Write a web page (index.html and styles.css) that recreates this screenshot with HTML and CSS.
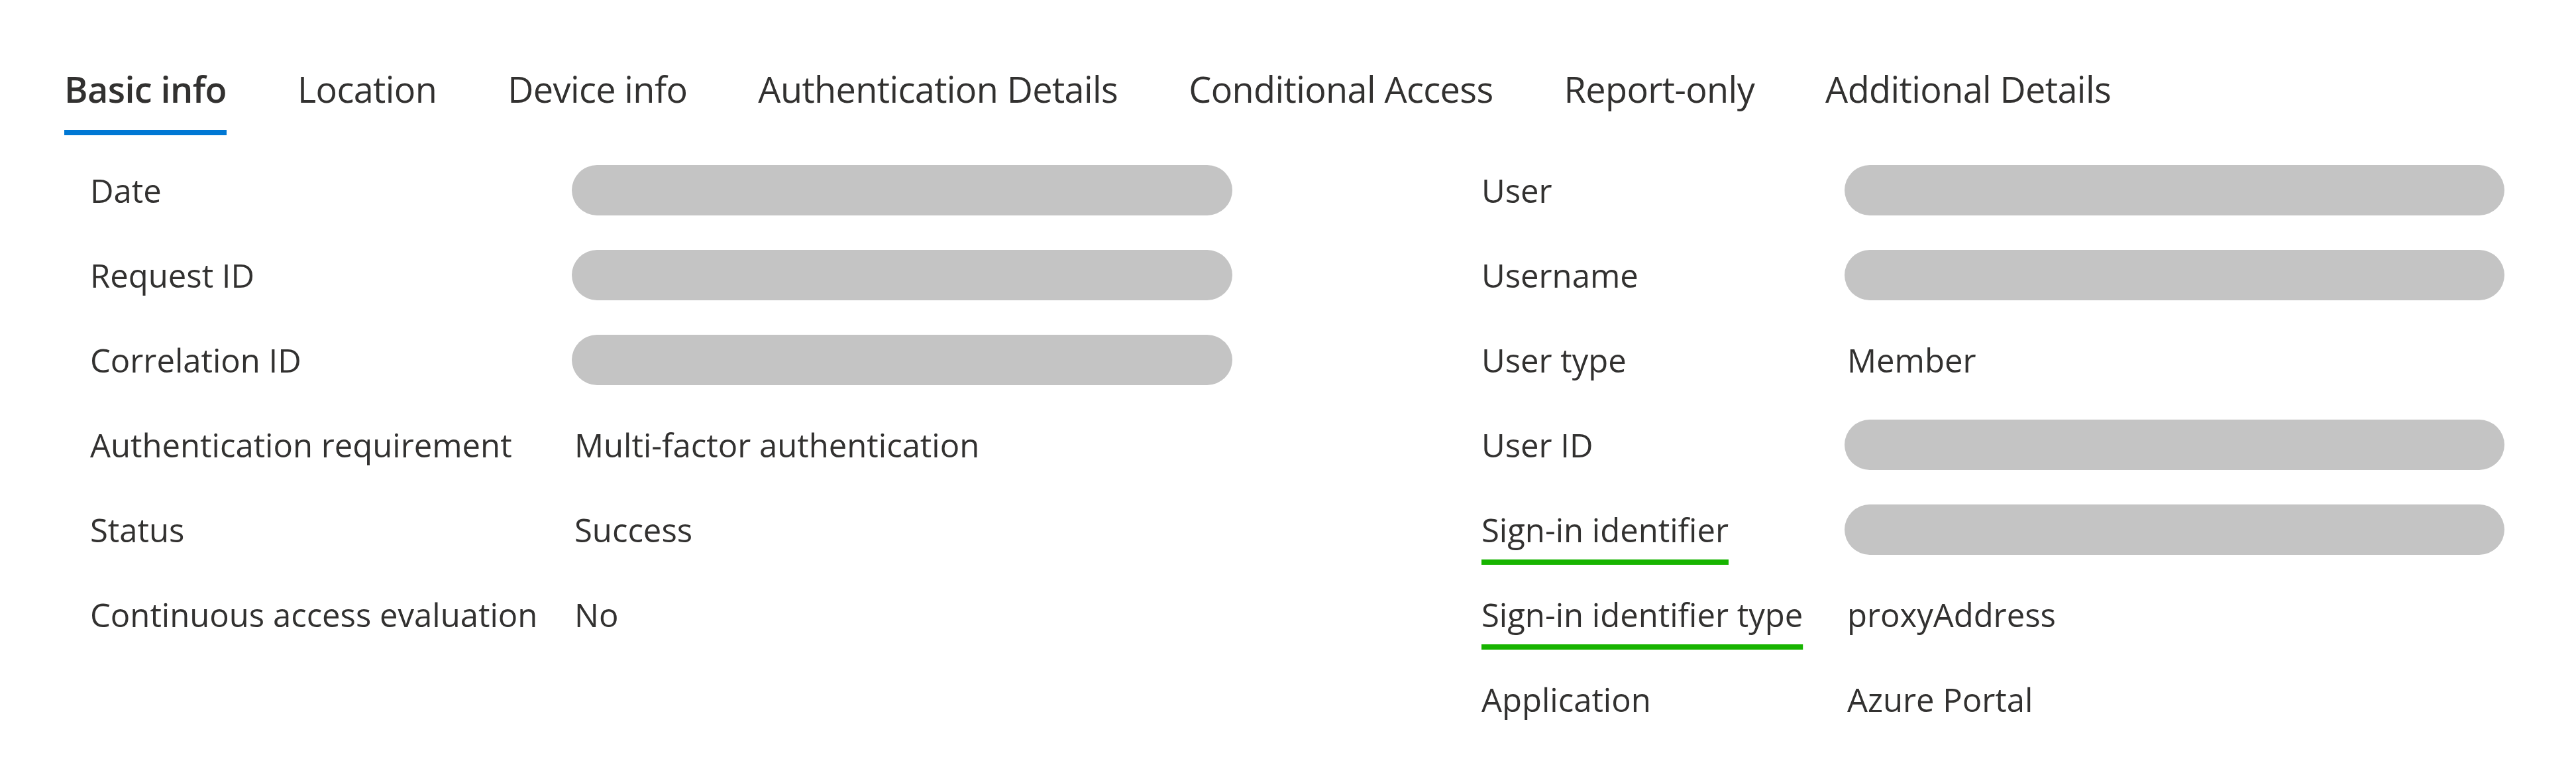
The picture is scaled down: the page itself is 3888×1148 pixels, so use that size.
FILE: index.html
```html
<!DOCTYPE html>
<html lang="en">
<head>
<meta charset="utf-8">
<title>Sign-in details</title>
<link rel="stylesheet" href="styles.css">
</head>
<body>
<div class="page">
  <nav class="tabs">
    <div class="tab active">Basic info</div>
    <div class="tab">Location</div>
    <div class="tab">Device info</div>
    <div class="tab">Authentication Details</div>
    <div class="tab">Conditional Access</div>
    <div class="tab">Report-only</div>
    <div class="tab">Additional Details</div>
  </nav>
  <div class="details">
    <div class="col col-left">
      <div class="row"><span class="label">Date</span><span class="pill"></span></div>
      <div class="row"><span class="label">Request ID</span><span class="pill"></span></div>
      <div class="row"><span class="label">Correlation ID</span><span class="pill"></span></div>
      <div class="row"><span class="label">Authentication requirement</span><span class="value">Multi-factor authentication</span></div>
      <div class="row"><span class="label">Status</span><span class="value">Success</span></div>
      <div class="row"><span class="label">Continuous access evaluation</span><span class="value">No</span></div>
    </div>
    <div class="col col-right">
      <div class="row"><span class="label">User</span><span class="pill"></span></div>
      <div class="row"><span class="label">Username</span><span class="pill"></span></div>
      <div class="row"><span class="label">User type</span><span class="value">Member</span></div>
      <div class="row"><span class="label">User ID</span><span class="pill"></span></div>
      <div class="row"><span class="label"><span class="mark">Sign-in identifier</span></span><span class="pill"></span></div>
      <div class="row"><span class="label"><span class="mark">Sign-in identifier type</span></span><span class="value">proxyAddress</span></div>
      <div class="row"><span class="label">Application</span><span class="value">Azure Portal</span></div>
    </div>
  </div>
</div>
</body>
</html>
```
FILE: styles.css
```css
html, body {
  margin: 0;
  padding: 0;
  background: #ffffff;
}
body {
  font-family: "Open Sans", "Segoe UI", sans-serif;
  color: #323130;
  width: 3888px;
  height: 1148px;
  overflow: hidden;
}
.page {
  padding: 94px 0 0 97px;
}
.tabs {
  display: flex;
  gap: 107px;
}
.tab {
  font-size: 54px;
  letter-spacing: -0.6px;
  line-height: 80px;
  padding-bottom: 22px;
  border-bottom: 8px solid transparent;
  white-space: nowrap;
}
.tab.active {
  font-weight: 600;
  border-bottom-color: #0078d4;
}
.details {
  display: flex;
  margin-top: 19px;
  padding-left: 39px;
}
.col-left {
  width: 1724px;
}
.col-right {
  margin-left: 376px;
  width: 1544px;
}
.row {
  display: grid;
  height: 128px;
  align-items: center;
  font-size: 49px;
  line-height: 128px;
  white-space: nowrap;
}
.col-left .row {
  grid-template-columns: 727px 1fr;
}
.col-right .row {
  grid-template-columns: 548px 1fr;
}
.value {
  padding-left: 4px;
}
.pill {
  display: block;
  height: 76px;
  border-radius: 38px;
  background: #c4c4c4;
}
.mark {
  text-decoration: underline;
  text-decoration-color: #17b400;
  text-decoration-thickness: 8px;
  text-underline-offset: 26px;
  text-decoration-skip-ink: none;
}
```
